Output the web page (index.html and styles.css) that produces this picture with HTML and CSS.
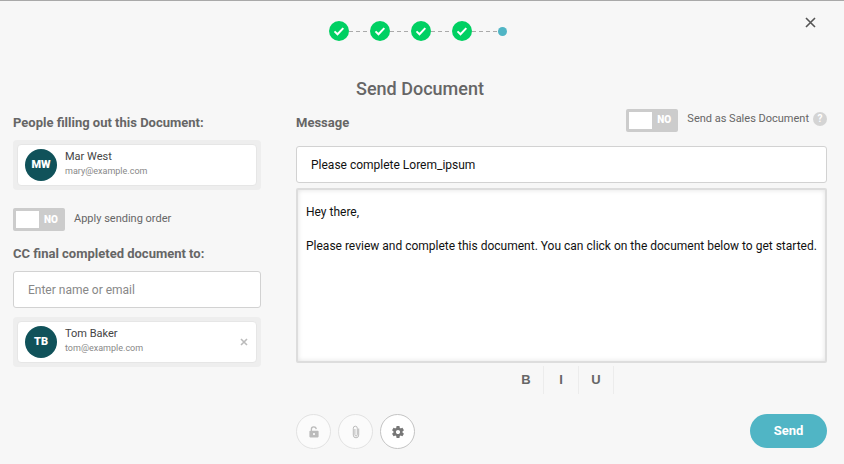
FILE: index.html
```html
<!DOCTYPE html>
<html lang="en">
<head>
    <meta charset="UTF-8">
    <meta name="viewport" content="width=device-width, initial-scale=1.0">
    <title>Send Document</title>
    <link rel="stylesheet" href="styles.css">
</head>
<body>
<!-- Progress steps -->
<header class="top">
    <ol class="steps">
        <li class="step"><svg viewBox="0 0 20 20"><path d="M5.5 10.4l3 2.9 5.8-6.2"/></svg></li>
        <li class="step"><svg viewBox="0 0 20 20"><path d="M5.5 10.4l3 2.9 5.8-6.2"/></svg></li>
        <li class="step"><svg viewBox="0 0 20 20"><path d="M5.5 10.4l3 2.9 5.8-6.2"/></svg></li>
        <li class="step"><svg viewBox="0 0 20 20"><path d="M5.5 10.4l3 2.9 5.8-6.2"/></svg></li>
        <li class="step current"></li>
    </ol>
    <button type="button" class="close" aria-label="Close">
        <svg viewBox="0 0 11 11"><path d="M1 1l9 9M10 1l-9 9"/></svg>
    </button>
</header>

<h1>Send Document</h1>

<form class="columns">
    <!-- Recipients -->
    <section class="people">
        <h2>People filling out this Document:</h2>
        <div class="card-wrap">
            <div class="card">
                <span class="avatar">MW</span>
                <div class="person">
                    <span class="name">Mar West</span>
                    <span class="email">mary@example.com</span>
                </div>
            </div>
        </div>

        <label class="switch order">
            <input type="checkbox">
            <span class="track">NO</span>
            <span class="switch-text">Apply sending order</span>
        </label>

        <h2><label for="cc">CC final completed document to:</label></h2>
        <input id="cc" class="field" type="text" placeholder="Enter name or email">
        <div class="card-wrap cc-card">
            <div class="card">
                <span class="avatar">TB</span>
                <div class="person">
                    <span class="name">Tom Baker</span>
                    <span class="email">tom@example.com</span>
                </div>
                <button type="button" class="remove" aria-label="Remove Tom Baker">
                    <svg viewBox="0 0 8 8"><path d="M1 1l6 6M7 1l-6 6"/></svg>
                </button>
            </div>
        </div>
    </section>

    <!-- Message -->
    <section class="message">
        <div class="message-head">
            <h2><label for="subject">Message</label></h2>
            <label class="switch">
                <input type="checkbox">
                <span class="track">NO</span>
                <span class="switch-text">Send as Sales Document</span>
            </label>
            <button type="button" class="help">?</button>
        </div>
        <input id="subject" class="field" type="text" value="Please complete Lorem_ipsum">
        <textarea class="body-text" aria-label="Message text">Hey there,

Please review and complete this document. You can click on the document below to get started.</textarea>
        <div class="format">
            <button type="button">B</button>
            <button type="button">I</button>
            <button type="button">U</button>
        </div>
        <div class="actions">
            <button type="button" class="round" aria-label="Lock" disabled>
                <svg viewBox="0 0 12 12"><path d="M3.4 5V3.3a2.4 2.4 0 0 1 4.8-.2" fill="none" stroke="currentColor" stroke-width="1.3"/><path fill-rule="evenodd" d="M2.2 4.8h7.6a.8.8 0 0 1 .8.8v5a.8.8 0 0 1-.8.8H2.2a.8.8 0 0 1-.8-.8v-5a.8.8 0 0 1 .8-.8zM6 7a1.1 1.1 0 1 0 0 2.2A1.1 1.1 0 1 0 6 7z"/></svg>
            </button>
            <button type="button" class="round" aria-label="Attach" disabled>
                <svg class="clip" viewBox="0 0 8 14"><path d="M6.7 3.5v6.6a2.7 2.7 0 0 1-5.4 0V3.2a2 2 0 0 1 4 0v6.6a1.2 1.2 0 0 1-2.4 0V4" fill="none" stroke="currentColor" stroke-width="1"/></svg>
            </button>
            <button type="button" class="round settings" aria-label="Settings">
                <svg viewBox="2 2 20 20"><path d="M19.43 12.98c.04-.32.07-.64.07-.98s-.03-.66-.07-.98l2.11-1.65c.19-.15.24-.42.12-.64l-2-3.46c-.12-.22-.39-.3-.61-.22l-2.49 1c-.52-.4-1.08-.73-1.69-.98l-.38-2.65C14.46 2.18 14.25 2 14 2h-4c-.25 0-.46.18-.49.42l-.38 2.65c-.61.25-1.17.59-1.69.98l-2.49-1c-.23-.09-.49 0-.61.22l-2 3.46c-.13.22-.07.49.12.64l2.11 1.65c-.04.32-.07.65-.07.98s.03.66.07.98l-2.11 1.65c-.19.15-.24.42-.12.64l2 3.46c.12.22.39.3.61.22l2.49-1c.52.4 1.08.73 1.69.98l.38 2.65c.03.24.24.42.49.42h4c.25 0 .46-.18.49-.42l.38-2.65c.61-.25 1.17-.59 1.69-.98l2.49 1c.23.09.49 0 .61-.22l2-3.46c.12-.22.07-.49-.12-.64l-2.11-1.65zM12 15.5c-1.93 0-3.5-1.57-3.5-3.5s1.57-3.5 3.5-3.5 3.5 1.57 3.5 3.5-1.57 3.5-3.5 3.5z"/></svg>
            </button>
            <button type="submit" class="send">Send</button>
        </div>
    </section>
</form>
</body>
</html>
```

FILE: styles.css
```css
* {
    box-sizing: border-box;
}
body {
    margin: 0;
    padding: 0 17px 0 13px;
    border-top: 1px solid #a9a9a9;
    background: #f7f7f7;
    color: #666;
    font-family: Roboto, "Liberation Sans", sans-serif;
    font-size: 12px;
    line-height: 16px;
}
button, input, textarea {
    font: inherit;
    color: inherit;
}
button {
    padding: 0;
    border: none;
    background: none;
    cursor: pointer;
}
svg {
    display: block;
    fill: currentColor;
}

/* Steps */
.top {
    display: grid;
    grid-template-columns: 1fr auto 1fr;
    padding-top: 14px;
}
.steps {
    grid-column: 2;
    display: flex;
    align-items: center;
    height: 32px;
    margin: 0;
    padding: 0 4px 0 0;
    list-style: none;
}
.step {
    display: flex;
    align-items: center;
}
.step svg {
    width: 20px;
    height: 20px;
    border-radius: 50%;
    background: #00d062;
    fill: none;
    stroke: #fff;
    stroke-width: 2;
}
.step::after {
    content: "";
    width: 21px;
    height: 1px;
    background: repeating-linear-gradient(90deg, #aaa 0 4px, transparent 4px 7px);
}
.step:nth-child(4)::after {
    width: 26px;
}
.step.current::after {
    width: 9px;
    height: 9px;
    border-radius: 50%;
    background: #50b5c5;
}
.close {
    justify-self: end;
    align-self: start;
    margin-right: 11px;
    padding-top: 2px;
    color: #555;
}
.close svg {
    width: 11px;
    height: 11px;
    stroke: currentColor;
    stroke-width: 1.6;
}
h1 {
    margin: 30px 0 6px;
    font-size: 18px;
    line-height: 24px;
    font-weight: 500;
    text-align: center;
}
h2 {
    margin: 0;
    font-size: 13px;
    line-height: 16px;
    font-weight: 700;
}

.columns {
    display: grid;
    grid-template-columns: 248fr 531fr;
    gap: 35px;
}
.people {
    display: flex;
    flex-direction: column;
    padding-top: 8px;
}
.people h2 {
    margin-bottom: 9px;
}

/* People cards */
.card-wrap {
    padding: 4px;
    border-radius: 4px;
    background: #eee;
}
.card {
    display: flex;
    align-items: center;
    gap: 8px;
    height: 42px;
    padding: 0 8px 0 7px;
    border: 1px solid #e6e6e6;
    border-radius: 4px;
    background: #fff;
}
.avatar {
    flex: none;
    width: 32px;
    height: 32px;
    border-radius: 50%;
    background: #10525a;
    color: #fff;
    font-size: 11px;
    font-weight: 900;
    line-height: 32px;
    text-align: center;
}
.person {
    display: flex;
    flex: 1;
    flex-direction: column;
    padding-bottom: 3px;
}
.name {
    font-size: 11px;
    line-height: 14px;
    color: #444;
}
.email {
    font-size: 9px;
    line-height: 14px;
    color: #888;
}
.remove svg {
    width: 8px;
    height: 8px;
    stroke: #bbb;
    stroke-width: 1.6;
}
.cc-card {
    margin-top: 9px;
}

/* NO/YES switch */
.switch {
    display: flex;
    align-items: center;
    gap: 9px;
    cursor: pointer;
}
.switch input {
    position: absolute;
    opacity: 0;
}
.track {
    display: flex;
    align-items: center;
    gap: 5px;
    width: 52px;
    height: 23px;
    padding: 3px;
    border-radius: 2px;
    background: #ccc;
    color: #fff;
    font-size: 10px;
    font-weight: 900;
}
.track::before {
    content: "";
    width: 23px;
    height: 17px;
    background: #fff;
}
.switch-text {
    padding-bottom: 2px;
    font-size: 11px;
}
.order {
    margin: 18px 0 15px;
}

/* Message */
.field {
    width: 100%;
    height: 37px;
    padding: 0 14px;
    border: 1px solid #d2d2d2;
    border-radius: 3px;
    background: #fff;
    color: #111;
}
.field::placeholder {
    color: #888;
}
.message-head {
    display: flex;
    align-items: center;
    height: 32px;
    margin-bottom: 7px;
}
.message-head .switch {
    margin: -6px 0 0 auto;
}
.help {
    width: 14px;
    height: 14px;
    margin: -8px 0 0 4px;
    border-radius: 50%;
    background: #d4d4d4;
    color: #fff;
    font-size: 10px;
    font-weight: 700;
    line-height: 14px;
}
.body-text {
    display: block;
    width: 100%;
    height: 175px;
    margin-top: 5px;
    padding: 14px 8px;
    border: 2px solid #ddd;
    border-radius: 2px;
    background: #fff;
    box-shadow: inset 0 0 5px rgba(0, 0, 0, 0.12);
    color: #111;
    line-height: 17px;
    resize: none;
}
.format {
    display: flex;
    justify-content: center;
    padding-top: 3px;
}
.format button {
    width: 35px;
    height: 28px;
    border-right: 1px solid #ececec;
    font-family: "Liberation Sans", Arial, sans-serif;
    font-size: 13px;
    font-weight: 700;
}
.actions {
    display: flex;
    gap: 7px;
    margin-top: 20px;
}
.round {
    display: flex;
    align-items: center;
    justify-content: center;
    width: 35px;
    height: 35px;
    border: 1px solid #e2e2e2;
    border-radius: 50%;
    background: #fbfbfb;
    color: #bbb;
}
.round svg {
    width: 12px;
    height: 12px;
}
.round .clip {
    width: 8px;
    height: 14px;
}
.round.settings {
    border-color: #c4c4c4;
    background: #fff;
    color: #777;
}
.send {
    width: 77px;
    height: 34px;
    margin-left: auto;
    border-radius: 17px;
    background: #50b5c5;
    color: #fff;
    font-size: 13px;
    font-weight: 700;
}
```
